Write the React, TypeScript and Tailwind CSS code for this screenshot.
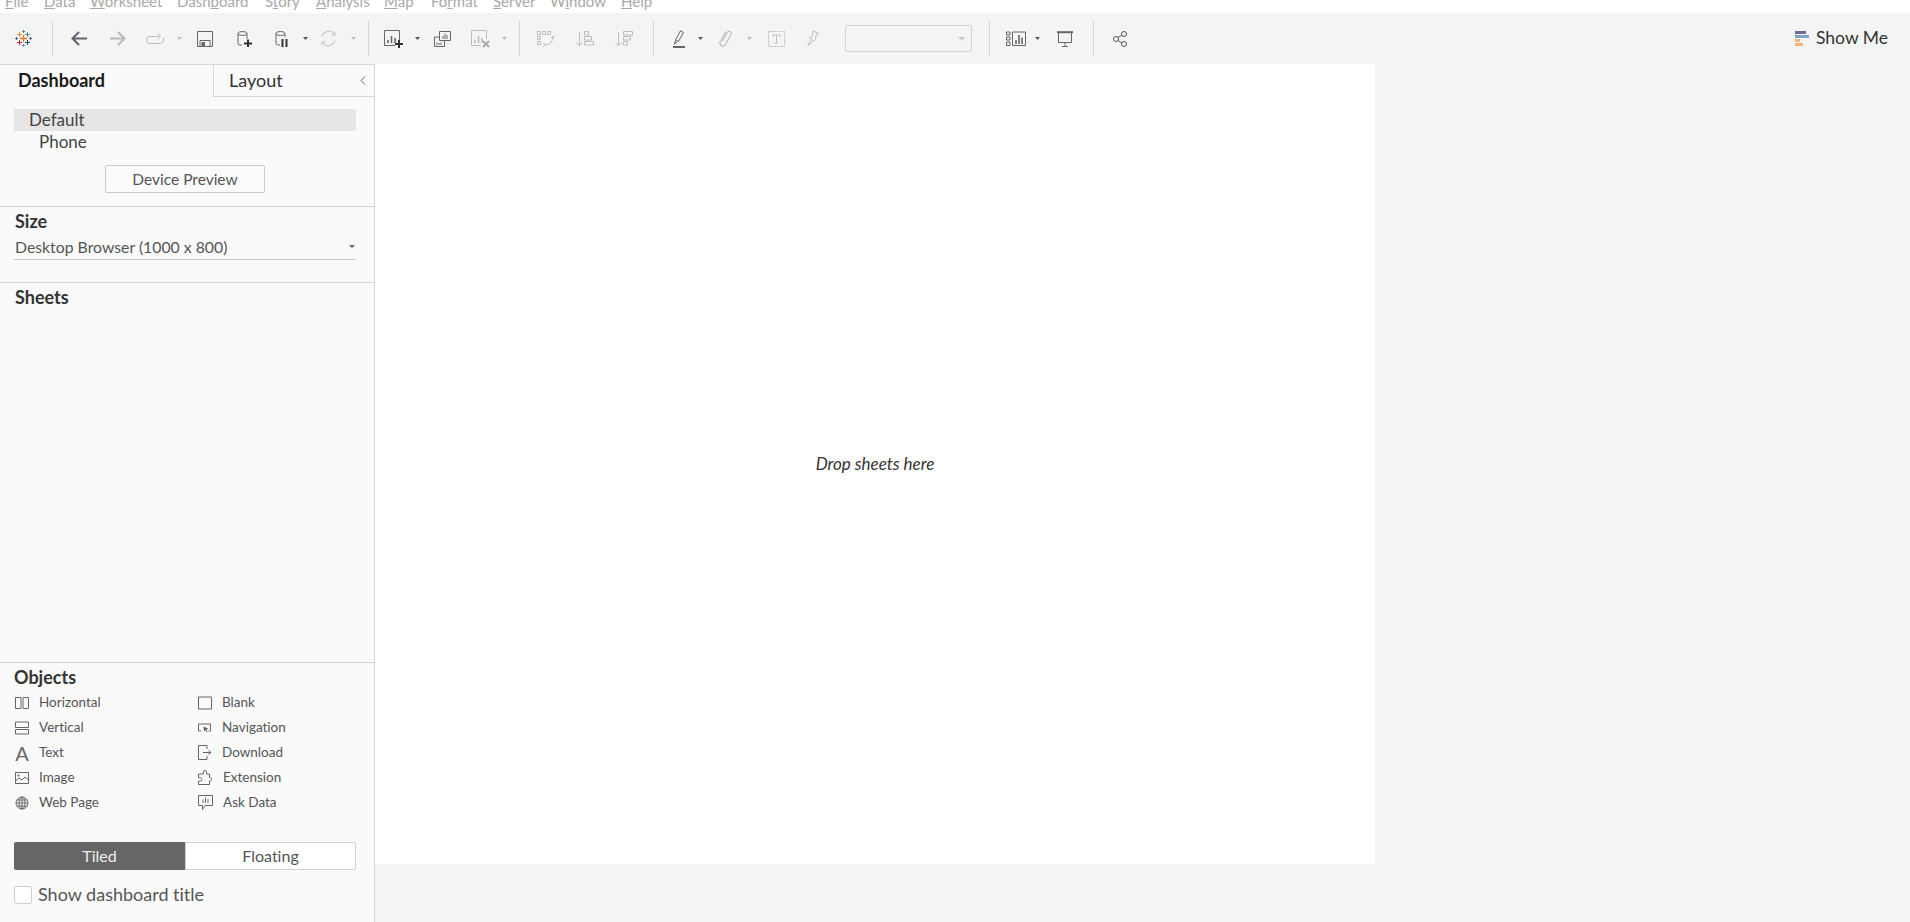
import React from "react";

const D = "#666666";
const L = "#bdbdbd";

function Sep({ cls }: { cls: string }) {
  return <div className={`w-px h-[35px] bg-[#d4d6d6] shrink-0 ${cls}`} />;
}

function Caret({ cls, light }: { cls: string; light?: boolean }) {
  return (
    <svg width="5" height="3" viewBox="0 0 5 3" className={`shrink-0 ${cls}`}>
      <path d="M0 0h5L2.5 3z" fill={light ? L : "#555555"} />
    </svg>
  );
}

function Cross({ x, y, a, c, w = 1 }: { x: number; y: number; a: number; c: string; w?: number }) {
  return <path d={`M${x - a} ${y}H${x + a}M${x} ${y - a}V${y + a}`} stroke={c} strokeWidth={w} fill="none" />;
}

function Bars({ x, y, c }: { x: number; y: number; c: string }) {
  return <path d={`M${x} ${y + 7}v-3M${x + 3.5} ${y + 7}v-7M${x + 7} ${y + 7}v-5`} stroke={c} strokeWidth="1.6" fill="none" />;
}

const menu: [string, string, string, string][] = [
  ["", "F", "ile", "w-[44px] pl-[5px]"],
  ["", "D", "ata", "w-[46px]"],
  ["", "W", "orksheet", "w-[87px]"],
  ["Dash", "b", "oard", "w-[88px]"],
  ["S", "t", "ory", "w-[51px]"],
  ["", "A", "nalysis", "w-[68px]"],
  ["", "M", "ap", "w-[47px]"],
  ["Fo", "r", "mat", "w-[62px]"],
  ["", "S", "erver", "w-[57px]"],
  ["W", "i", "ndow", "w-[71px]"],
  ["", "H", "elp", "w-[40px]"],
];

function MenuBar() {
  return (
    <div className="h-[13px] bg-white overflow-hidden shrink-0">
      <div className="flex -mt-[9px] text-[15px] leading-[20px] text-[#a9a9a9]">
        {menu.map((m, i) => (
          <span key={i} className={`shrink-0 ${m[3]}`}>
            {m[0]}
            <span className="underline">{m[1]}</span>
            {m[2]}
          </span>
        ))}
      </div>
    </div>
  );
}

function Toolbar() {
  return (
    <div className="h-[51px] flex items-center shrink-0">
      <svg width="17" height="17" viewBox="0 0 17 17" className="ml-[15px] shrink-0">
        <Cross x={8.5} y={8.5} a={3.5} c="#e8762d" w={1.4} />
        <Cross x={8.5} y={1.5} a={1.5} c="#5b879b" />
        <Cross x={8.5} y={15.5} a={1.5} c="#7099be" />
        <Cross x={1.5} y={8.5} a={1.5} c="#5c6692" />
        <Cross x={15.5} y={8.5} a={1.5} c="#4e6c9b" />
        <Cross x={4.5} y={4.5} a={2.5} c="#eb9129" />
        <Cross x={12.5} y={4.5} a={2.5} c="#5b879b" />
        <Cross x={4.5} y={12.5} a={2.5} c="#c72037" />
        <Cross x={12.5} y={12.5} a={2.5} c="#1f447a" />
      </svg>
      <Sep cls="ml-[20px]" />
      <svg width="16" height="15" viewBox="0 0 16 15" className="ml-[18px] shrink-0">
        <path d="M16 7.5H2M8 1L1.5 7.5L8 14" stroke="#695f72" strokeWidth="2" fill="none" />
      </svg>
      <svg width="16" height="15" viewBox="0 0 16 15" className="ml-[23px] shrink-0">
        <path d="M0 7.5H14M8 1L14.5 7.5L8 14" stroke="#b8b8b8" strokeWidth="2" fill="none" />
      </svg>
      <svg width="18" height="12" viewBox="0 0 18 12" className="ml-[20px] shrink-0">
        <path d="M13 3.5H4a3.5 3.5 0 0 0 0 7h10a3.5 3.5 0 0 0 3.5-3.5V5M12 .5l2.5 3L12 6" stroke={L} strokeWidth="1" fill="none" />
      </svg>
      <Caret cls="ml-[13px]" light />
      <svg width="16" height="16" viewBox="0 0 16 16" className="ml-[15px] shrink-0">
        <path d="M.5.5h15v15H.5zM3 15.5V9.5h10v6" stroke={D} fill="none" />
        <rect x="4.5" y="11" width="3.5" height="4" fill={D} />
      </svg>
      <svg width="15" height="16" viewBox="0 0 15 16" className="ml-[24px] shrink-0">
        <ellipse cx="5.5" cy="2.5" rx="4.5" ry="2" stroke={D} fill="none" />
        <path d="M1 2.5v9.5a2 2 0 0 0 2 2h2M10 2.5V8" stroke={D} fill="none" />
        <path d="M7 12.5h8M11 8.5v7.5" stroke="#333333" strokeWidth="2" fill="none" />
      </svg>
      <svg width="13" height="16" viewBox="0 0 13 16" className="ml-[23px] shrink-0">
        <ellipse cx="5.5" cy="2.5" rx="4.5" ry="2" stroke={D} fill="none" />
        <path d="M1 2.5v9.5a2 2 0 0 0 2 2h2M10 2.5V6" stroke={D} fill="none" />
        <path d="M7.5 8v8M11.5 8v8" stroke="#333333" strokeWidth="2" fill="none" />
      </svg>
      <Caret cls="ml-[15px]" />
      <svg width="17" height="17" viewBox="0 0 17 17" className="ml-[12px] shrink-0">
        <path d="M2 6.5a6.8 6.8 0 0 1 12.5-2M15 10.5a6.8 6.8 0 0 1-12.5 2M15 1.5v3.5h-3.5M2 15.5V12h3.5" stroke={L} fill="none" />
      </svg>
      <Caret cls="ml-[14px]" light />
      <Sep cls="ml-[12px]" />
      <svg width="19" height="18" viewBox="0 0 19 18" className="ml-[15px] shrink-0">
        <path d="M11 15.5H.5V.5h15V10" stroke={D} fill="none" />
        <Bars x={4} y={6} c={D} />
        <path d="M11 14h8M15 10v8" stroke="#333333" strokeWidth="2" fill="none" />
      </svg>
      <Caret cls="ml-[12px]" />
      <svg width="17" height="16" viewBox="0 0 17 16" className="ml-[14px] shrink-0">
        <path d="M5.5 9.5V.5h11v9zM5.5 6H.5v9.5h10V9.5" stroke={D} fill="none" />
        <path d="M9 8V5M11 8V2.5M13 8V4M3 14v-2.5M5 14v-2M7 14v-2.5" stroke={D} fill="none" />
      </svg>
      <svg width="19" height="18" viewBox="0 0 19 18" className="ml-[20px] shrink-0">
        <path d="M10 15.5H.5V.5h15V9" stroke={L} fill="none" />
        <Bars x={4} y={6} c={L} />
        <path d="M12 11l6 6M18 11l-6 6" stroke="#a9a9a9" strokeWidth="2" fill="none" />
      </svg>
      <Caret cls="ml-[12px]" light />
      <Sep cls="ml-[12px]" />
      <svg width="17" height="16" viewBox="0 0 17 16" className="ml-[17px] shrink-0">
        <path d="M.5.5h3v3h-3zM5.5.5h3v3h-3zM10.5.5h3v3h-3zM.5 5.5h3v3h-3zM.5 10.5h3v3h-3z" stroke={L} fill="none" />
        <path d="M16 5.5a8 8 0 0 1-8 8.5M14 7l2-2 1 2.5M6.500 12l1.500 2-2 1.500" stroke={L} fill="none" />
      </svg>
      <svg width="18" height="16" viewBox="0 0 18 16" className="ml-[22px] shrink-0">
        <path d="M3.5 1v13M.5 11.5l3 3.5 3-3.5" stroke={L} fill="none" />
        <path d="M8.5.5h4v3.5h-4zM8.5 5.5h7v3.5h-7zM8.5 10.5h9v3.5h-9z" stroke={L} fill="none" />
      </svg>
      <svg width="18" height="16" viewBox="0 0 18 16" className="ml-[21px] shrink-0">
        <path d="M3.5 1v13M.5 11.5l3 3.5 3-3.5" stroke={L} fill="none" />
        <path d="M8.5.5h9v3.5h-9zM8.5 5.5h7v3.5h-7zM8.5 10.5h4v3.5h-4z" stroke={L} fill="none" />
      </svg>
      <Sep cls="ml-[20px]" />
      <svg width="12" height="18" viewBox="0 0 12 18" className="ml-[19px] shrink-0">
        <path d="M7.5.8l3 1.7-5 9-3-1.600zM2.500 10.200L1.500 14l3-2.200" stroke={D} fill="none" />
        <path d="M0 17h12" stroke={D} strokeWidth="2" />
      </svg>
      <Caret cls="ml-[13px]" />
      <svg width="13" height="17" viewBox="0 0 13 17" className="ml-[16px] shrink-0">
        <path d="M3.500 11L8 2.500a2.200 2.200 0 0 1 4 1.800L6.500 14.500a3 3 0 0 1-5.300-2.800L6.500 2" stroke={L} strokeWidth="1.200" fill="none" />
      </svg>
      <Caret cls="ml-[15px]" light />
      <svg width="17" height="16" viewBox="0 0 17 16" className="ml-[16px] shrink-0">
        <rect x=".5" y=".5" width="16" height="15" stroke={L} strokeDasharray="2 1" fill="none" />
        <path d="M5 6V4h7v2M8.500 4v8M7 12h3" stroke={L} fill="none" />
      </svg>
      <svg width="12" height="17" viewBox="0 0 12 17" className="ml-[22px] shrink-0">
        <path d="M6 .7l5.500 2.800-2.500 1.200-.5 5L6.500 11 2.500 7.500 4.500 7l1.500-3.500zM4 9.500l-3 6 5-4" stroke={L} fill="none" />
      </svg>
      <div className="ml-[26px] w-[127px] h-[27px] shrink-0 border border-[#d3d5d5] rounded-[2px] flex items-center justify-end pr-[6px]">
        <svg width="7" height="4" viewBox="0 0 7 4">
          <path d="M0 0h7L3.500 4z" fill="#cccccc" />
        </svg>
      </div>
      <Sep cls="ml-[17px]" />
      <svg width="20" height="16" viewBox="0 0 20 16" className="ml-[16px] shrink-0">
        <path d="M.5 1h3.500v3H.5zM.5 6h3.500v3H.5zM.5 11h3.500v3.500H.5zM6.500 1h13v13.500h-13z" stroke={D} fill="none" />
        <path d="M10 13v-4M13 13V4M16 13V6.500" stroke={D} strokeWidth="1.600" fill="none" />
      </svg>
      <Caret cls="ml-[9px]" />
      <svg width="16" height="16" viewBox="0 0 16 16" className="ml-[17px] shrink-0">
        <path d="M0 1.200h16" stroke={D} strokeWidth="2" />
        <path d="M1.500 2v9.500h13V2M8 11.500v4M5 15.500h6" stroke={D} fill="none" />
      </svg>
      <Sep cls="ml-[20px]" />
      <svg width="14" height="16" viewBox="0 0 14 16" className="ml-[19px] shrink-0">
        <circle cx="3" cy="8" r="2.500" stroke="#555555" fill="none" />
        <circle cx="11" cy="3" r="2.500" stroke="#555555" fill="none" />
        <circle cx="11" cy="13" r="2.500" stroke="#555555" fill="none" />
        <path d="M5 6.500l4-2.500M5 9.500l4 2.500" stroke="#555555" fill="none" />
      </svg>
      <div className="ml-auto flex items-center w-[115px] shrink-0">
        <svg width="14" height="15" viewBox="0 0 14 15" className="shrink-0">
          <rect x="0" y="0" width="11" height="3" fill="#6f6a93" />
          <rect x="0" y="4" width="14" height="3" fill="#7ea3c7" />
          <rect x="0" y="8" width="5" height="3" fill="#f6b37f" />
          <rect x="0" y="12" width="8" height="3" fill="#f6b37f" />
        </svg>
        <span className="ml-[7px] -mt-[2px] text-[17.5px] leading-[20px] text-[#333333]">Show Me</span>
      </div>
    </div>
  );
}

const ic = "shrink-0";
const s = { stroke: D, fill: "none" };
const objects: [string, React.ReactNode][] = [
  ["Horizontal", <svg key="h" width="14" height="14" viewBox="0 0 14 14" className={ic}><path d="M.5 1.500h5.500v11H.5zM8 1.500h5.500v11H8z" {...s} /></svg>],
  ["Blank", <svg key="b" width="14" height="14" viewBox="0 0 14 14" className={ic}><path d="M.5 1h13v12H.5z" {...s} /></svg>],
  ["Vertical", <svg key="v" width="14" height="14" viewBox="0 0 14 14" className={ic}><path d="M.5 1h13v5.500H.5zM.5 8.500h13V13H.5z" {...s} /></svg>],
  ["Navigation", <svg key="n" width="14" height="14" viewBox="0 0 14 14" className={ic}><path d="M3 10H.5V3h12v7h-2" {...s} /><path d="M5.500 5.500l5 2.200-2 .8 1 2.500h-1l-1-2-1.500 1.500z" fill={D} /></svg>],
  ["Text", <span key="t" className="w-[14px] text-center text-[20px] leading-[14px] text-[#666666] shrink-0">A</span>],
  ["Download", <svg key="d" width="14" height="16" viewBox="0 0 14 16" className={ic}><path d="M9 4V.5H.5v14H9V11M5 7.500h8M10.500 5.500l2.500 2-2.500 2" {...s} /></svg>],
  ["Image", <svg key="i" width="14" height="14" viewBox="0 0 14 14" className={ic}><path d="M.5 1.500h13v11H.5zM.5 10l3.500-3 3 2 3-3 3.500 3" {...s} /><circle cx="3.500" cy="4.500" r="1" fill={D} /></svg>],
  ["Extension", <svg key="e" width="15" height="16" viewBox="0 0 15 16" className={ic}><path d="M5.500 4V2a1.500 1.500 0 0 1 3 0v2h3v3.500h1a2 2 0 0 1 0 3.500h-1V14.500H.5v-3.300h2a1.800 1.800 0 0 0 0-3.500h-2V4z" {...s} /></svg>],
  ["Web Page", <svg key="w" width="14" height="14" viewBox="0 0 14 14" className={ic}><circle cx="7" cy="7" r="6" {...s} /><path d="M1 7h12M1.800 4h10.400M1.800 10h10.400M7 1v12" {...s} /><ellipse cx="7" cy="7" rx="3" ry="6" {...s} /></svg>],
  ["Ask Data", <svg key="a" width="15" height="16" viewBox="0 0 15 16" className={ic}><path d="M.5 .5h14v10H7l-2.500 4v-4h-4z" {...s} /><path d="M5 8V4.500M7.500 8V2.500M10 8V4" {...s} /></svg>],
];

function Sidebar() {
  return (
    <div className="w-[375px] shrink-0 h-full bg-[#fafafa] border-t border-r border-[#d4d6d6] flex flex-col">
      <div className="h-[32px] flex shrink-0">
        <div className="w-[213px] pl-[18px] pt-[4px] text-[18px] leading-[22px] font-bold text-[#1a1a1a]">Dashboard</div>
        <div className="flex-1 border-l border-b border-[#d4d6d6] flex items-center pl-[15px] text-[18px] text-[#333333]">
          <span>Layout</span>
          <svg width="6" height="9" viewBox="0 0 6 9" className="ml-auto mr-[8px]">
            <path d="M5 .5L1 4.500l4 4" stroke="#666666" fill="none" />
          </svg>
        </div>
      </div>
      <div className="pt-[12px] pb-[13px] border-b border-[#d4d6d6] shrink-0">
        <div className="ml-[14px] w-[342px] h-[22px] bg-[#e6e6e6] pl-[15px] text-[17px] leading-[22px] text-[#444444]">Default</div>
        <div className="ml-[39px] h-[22px] text-[17px] leading-[22px] text-[#444444]">Phone</div>
        <div className="ml-[105px] mt-[12px] w-[160px] h-[28px] pt-px border border-[#cccccc] rounded-[2px] bg-[#fbfbfb] flex items-center justify-center text-[15.5px] text-[#555555]">Device Preview</div>
      </div>
      <div className="h-[76px] border-b border-[#d4d6d6] shrink-0 pl-[14px]">
        <div className="pt-[4px] pl-px text-[18px] leading-[20px] font-bold text-[#333333]">Size</div>
        <div className="mt-[3px] w-[342px] h-[26px] border-b border-[#c8c8c8] flex items-center justify-between pl-px pr-[1px] text-[15.8px] text-[#555555]">
          <span>Desktop Browser (1000 x 800)</span>
          <svg width="6" height="3" viewBox="0 0 6 3"><path d="M0 0h6L3 3z" fill="#666666" /></svg>
        </div>
      </div>
      <div className="flex-1 border-b border-[#d4d6d6] px-[15px] pt-[4px] text-[18px] leading-[20px] font-bold text-[#333333]">Sheets</div>
      <div className="h-[259px] shrink-0 pl-[14px]">
        <div className="pt-[4px] text-[18px] leading-[20px] font-bold text-[#333333]">Objects</div>
        <div className="mt-[3px] grid grid-cols-[183px_1fr] auto-rows-[25px] items-center">
          {objects.map(([t, icon]) => (
            <div key={t} className="flex items-center gap-[10px] pl-px text-[13.5px] text-[#555555]">
              {icon}
              <span>{t}</span>
            </div>
          ))}
        </div>
        <div className="mt-[27px] flex w-[342px] h-[28px] text-[16px]">
          <div className="w-[171px] bg-[#666666] rounded-l-[2px] text-[#eeeeee] flex items-center justify-center">Tiled</div>
          <div className="w-[171px] bg-white border border-[#d0d0d0] rounded-r-[2px] text-[#555555] flex items-center justify-center">Floating</div>
        </div>
        <div className="mt-[16px] flex items-center gap-[6px]">
          <div className="w-[18px] h-[18px] bg-white border border-[#cfcfcf] rounded-[2px]" />
          <span className="-mt-[2px] text-[18px] leading-[18px] text-[#555555]">Show dashboard title</span>
        </div>
      </div>
    </div>
  );
}

export default function App() {
  return (
    <div className="w-[1910px] h-[922px] overflow-hidden flex flex-col bg-[#f3f5f5] font-[Lato,sans-serif] [font-variant-ligatures:none]">
      <MenuBar />
      <Toolbar />
      <div className="flex-1 flex min-h-0">
        <Sidebar />
        <div className="w-[1000px] h-[800px] bg-white flex items-center justify-center">
          <span className="italic text-[17px] text-[#333333]">Drop sheets here</span>
        </div>
      </div>
    </div>
  );
}
